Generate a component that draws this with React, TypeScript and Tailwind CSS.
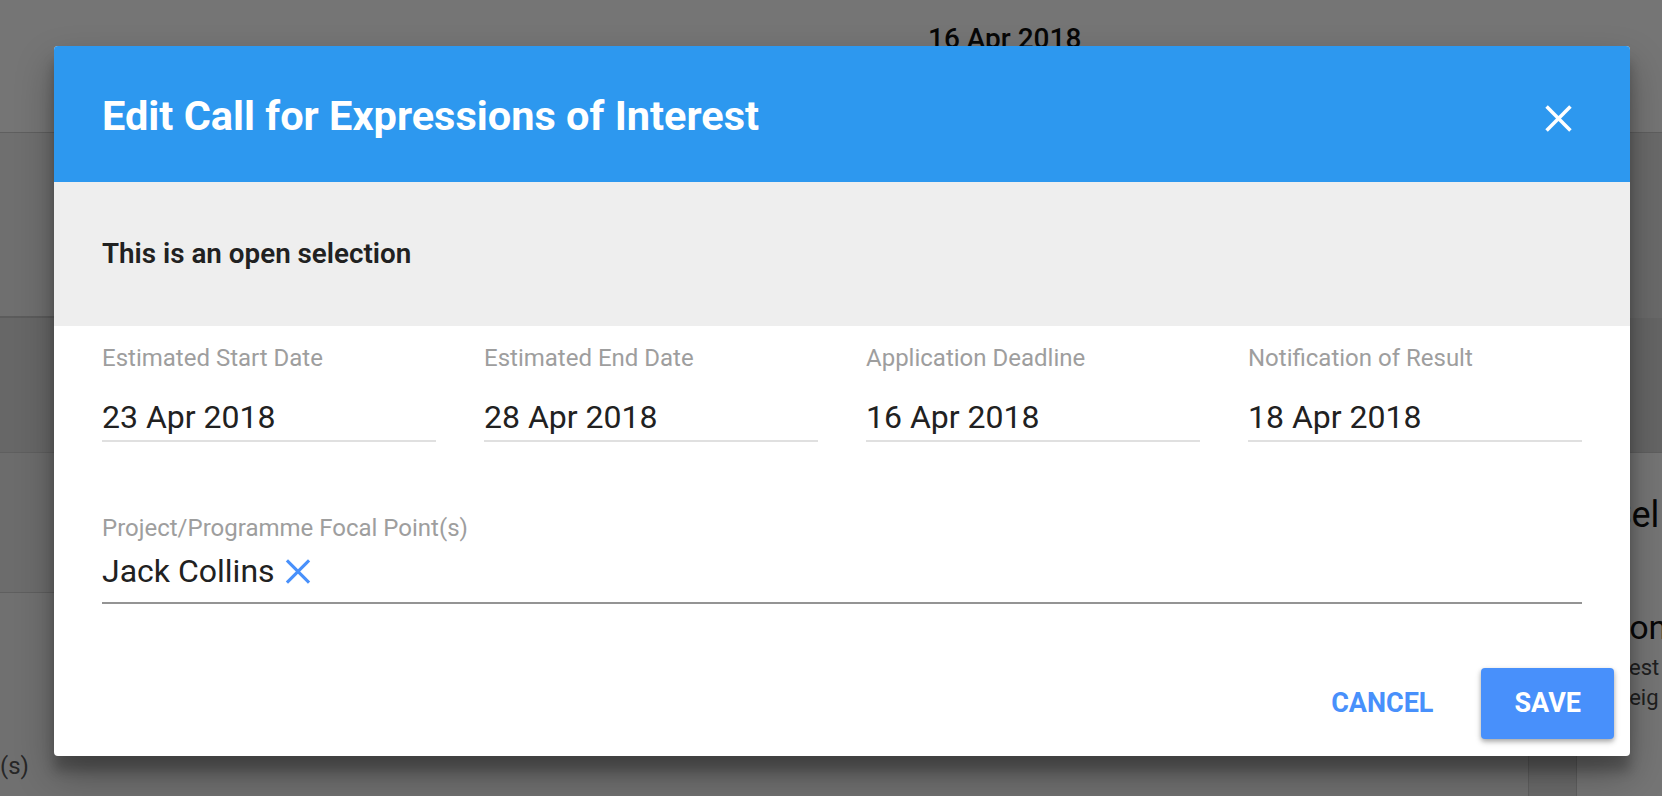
import React from 'react';

const XMark = ({ className, stroke }: { className: string; stroke: number }) => (
  <svg viewBox="0 0 26 26" className={className} fill="none" stroke="currentColor" strokeWidth={stroke} strokeLinecap="butt">
    <line x1="1.5" y1="1.5" x2="24.5" y2="24.5" />
    <line x1="24.5" y1="1.5" x2="1.5" y2="24.5" />
  </svg>
);

const fields = [
  { label: 'Estimated Start Date', value: '23 Apr 2018' },
  { label: 'Estimated End Date', value: '28 Apr 2018' },
  { label: 'Application Deadline', value: '16 Apr 2018' },
  { label: 'Notification of Result', value: '18 Apr 2018' },
];

const App: React.FC = () => {
  return (
    <div className="relative h-[796px] w-full overflow-hidden bg-white font-['Roboto','Liberation_Sans',sans-serif]">
      {/* PAGE BEHIND THE MODAL */}
      <div className="flex h-full flex-col">
        <div className="h-[133px] border-b border-[#cfcfcf] pl-[928px] pt-[18px] text-[28px] font-medium text-[#111]">16 Apr 2018</div>
        <div className="flex flex-1 bg-[#f2f2f2]">
          <div className="flex flex-1 flex-col">
            <div className="h-[185px] border-b-2 border-[#c8c8c8]" />
            <div className="h-[135px] border-b border-[#cfcfcf] bg-[#e0e0e0]" />
            <div className="h-[140px] border-b border-[#cfcfcf] bg-[#ececec]" />
            <div className="flex flex-1 items-end bg-[#f5f5f5] pb-[12px] text-[24px] text-[#555]">(s)</div>
          </div>
          <div className="flex w-[134px] flex-col overflow-hidden whitespace-nowrap border-l border-[#d0d0d0] bg-[#e6e6e6]">
            <div className="h-[185px]" />
            <div className="h-[135px] border-b border-[#cfcfcf] bg-[#dcdcdc]" />
            <div className="ml-[47px] flex flex-1 flex-col border-l border-[#d0d0d0] bg-white pl-[33px]">
              <div className="pt-[40px] text-[36px] leading-[44px] text-[#111]">Sel</div>
              <div className="-ml-[3px] mt-[70px] text-[34px] leading-[40px] text-[#111]">Con</div>
              <div className="mt-[6px] pl-[7px] text-[22px] leading-[30px] text-[#444]">Test 1</div>
              <div className="text-[22px] leading-[30px] text-[#444]">Weig</div>
            </div>
          </div>
        </div>
      </div>

      {/* BACKDROP */}
      <div className="absolute inset-0 bg-black/[0.54]" />

      {/* DIALOG */}
      <div className="absolute inset-0 pl-[54px] pt-[46px]">
        <div className="flex h-[710px] w-[1576px] flex-col overflow-hidden rounded-[4px] bg-white shadow-[0_19px_38px_rgba(0,0,0,0.30),0_15px_12px_rgba(0,0,0,0.22)]">
          <div className="flex h-[136px] shrink-0 items-center justify-between bg-[#2d98ef] pl-[48px] pr-[58px] pt-[4px]">
            <h2 className="text-[41.5px] font-bold leading-[46px] text-white">Edit Call for Expressions of Interest</h2>
            <XMark className="mt-[4px] h-[27px] w-[27px] text-white" stroke={3.4} />
          </div>

          <div className="flex h-[144px] shrink-0 items-center bg-[#eeeeee] pl-[48px]">
            <p className="text-[27.8px] font-semibold leading-[32px] text-[#212121]">This is an open selection</p>
          </div>

          <div className="px-[48px] pt-[18px]">
            <div className="grid grid-cols-4 gap-[48px]">
              {fields.map((f) => (
                <div key={f.label} className="border-b-2 border-[#e0e0e0] pb-[5px]">
                  <div className="text-[24px] leading-[28px] text-[#9e9e9e]">{f.label}</div>
                  <div className="mt-[27px] text-[32px] leading-[36px] text-[#212121]">{f.value}</div>
                </div>
              ))}
            </div>

            <div className="mt-[72px] border-b-2 border-[#949494] pb-[13px]">
              <div className="text-[24px] leading-[28px] text-[#9e9e9e]">Project/Programme Focal Point(s)</div>
              <div className="mt-[11px] flex items-center text-[32px] leading-[36px] text-[#212121]">
                <span>Jack Collins</span>
                <XMark className="ml-[10px] h-[25px] w-[26px] text-[#4890fb]" stroke={3.2} />
              </div>
            </div>
          </div>

          <div className="mt-auto flex items-center justify-end gap-[15px] pb-[17px] pr-[16px]">
            <button className="h-[71px] rounded-[4px] px-[33px] text-[27px] font-bold uppercase text-[#4890fb]">Cancel</button>
            <button className="h-[71px] rounded-[4px] bg-[#4890fb] px-[33px] text-[27px] font-bold uppercase text-white shadow-[0_3px_6px_rgba(0,0,0,0.22),0_2px_4px_rgba(0,0,0,0.18)]">Save</button>
          </div>
        </div>
      </div>
    </div>
  );
};

export default App;
